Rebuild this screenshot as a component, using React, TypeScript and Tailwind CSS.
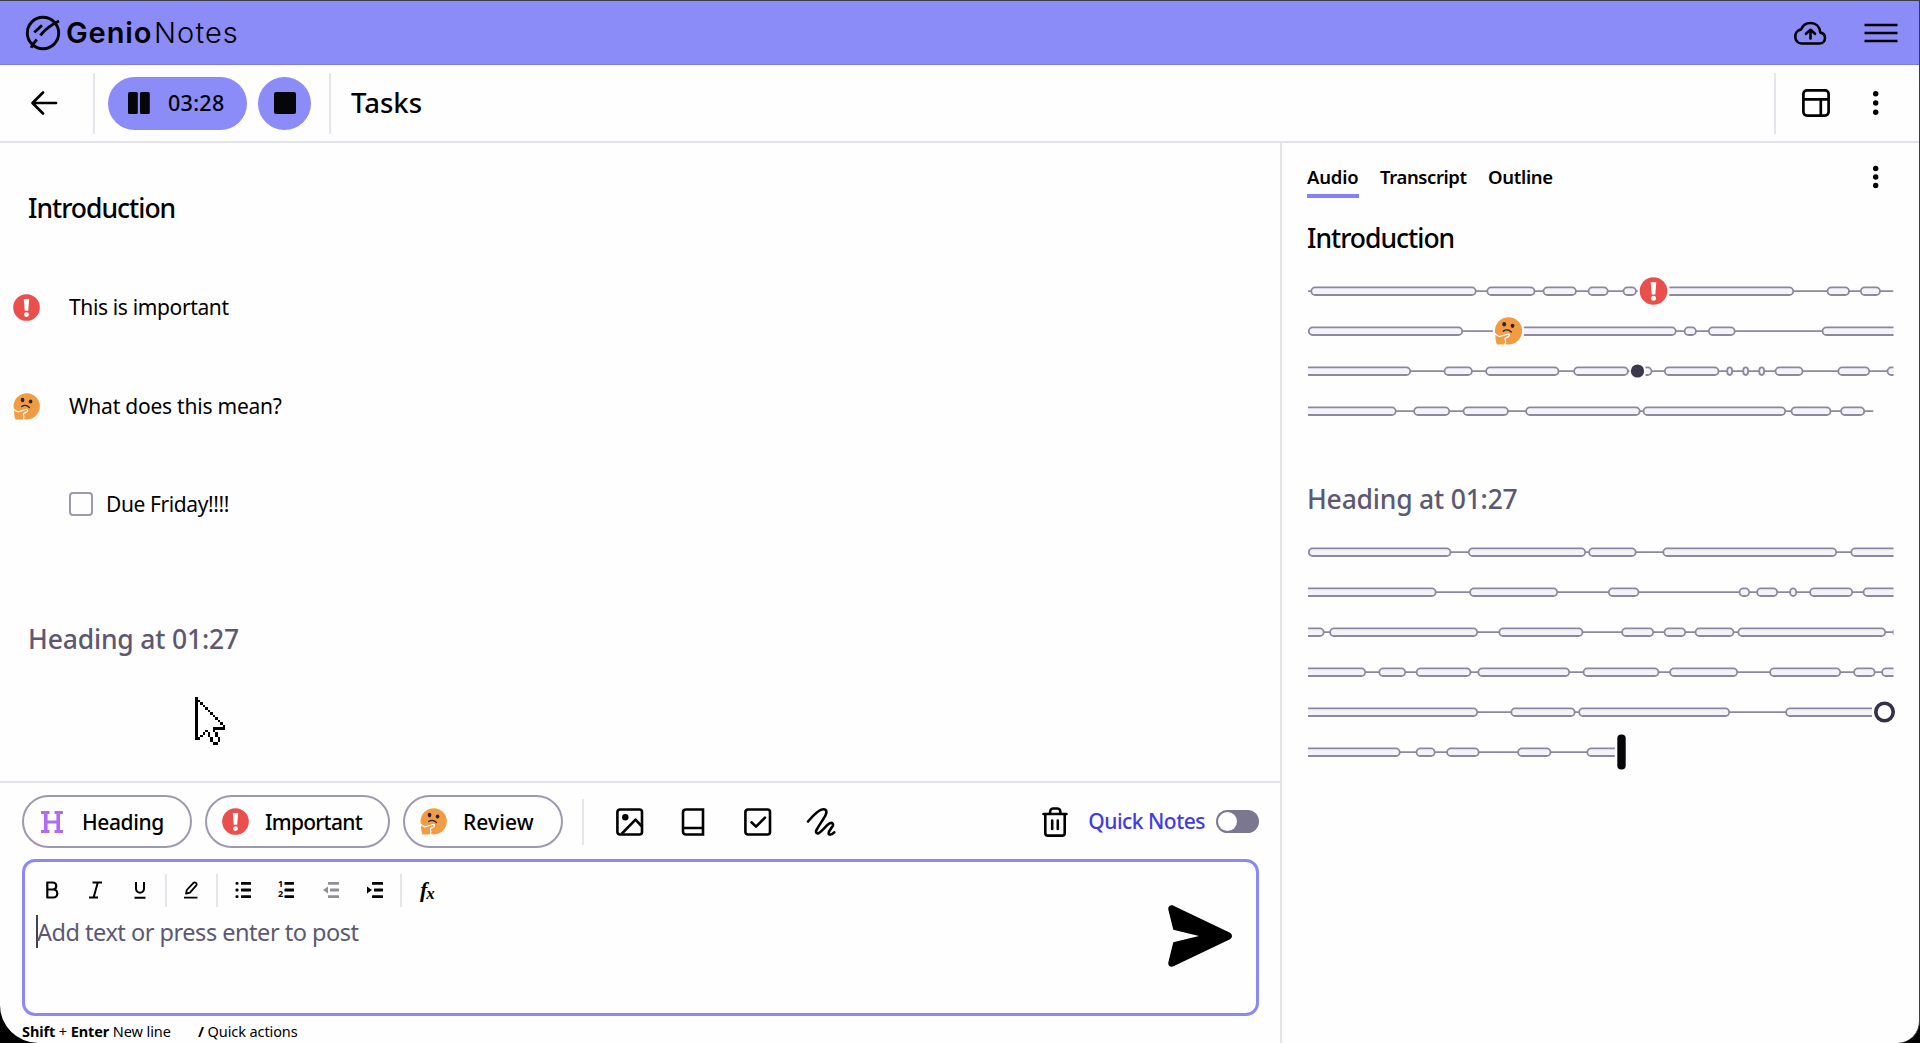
import React from 'react'
import clsx from 'clsx'

type MarkerKind = 'important' | 'review' | 'dot' | 'ring' | 'playhead'

interface Marker {
  kind: MarkerKind
  x: number
  gap: number
}

interface Track {
  pills: [number, number][]
  end?: number
  marker?: Marker
}

const TRACK_WIDTH = 585.5

// pills that start below 0 or run past TRACK_WIDTH continue from / onto another row
const INTRO_TRACKS: Track[] = [
  {
    pills: [[2.5, 168.5], [178.5, 227.3], [234.7, 268.7], [279.7, 300.5], [314.7, 328.7], [340, 486], [518.7, 541.8], [552, 572.8]],
    marker: { kind: 'important', x: 345.5, gap: 15.8 }
  },
  {
    pills: [[0, 155], [190, 368.5], [375.8, 388.7], [400, 427.5], [513.7, 600]],
    marker: { kind: 'review', x: 200.3, gap: 15.5 }
  },
  {
    pills: [[-9, 103], [135.7, 164.7], [177.3, 251.3], [265.3, 320.7], [328, 344.3], [356, 411.3], [418.5, 424.9], [434.5, 440.9], [450.5, 456.9], [466.7, 495.3], [529.5, 562], [578.7, 600]],
    marker: { kind: 'dot', x: 329.5, gap: 8 }
  },
  {
    pills: [[-9, 88.5], [105.3, 142], [154.7, 200.7], [217.3, 332.5], [334.7, 478], [482.7, 523.3], [532.3, 557]],
    end: 565.5
  }
]

const HEADING_TRACKS: Track[] = [
  { pills: [[0, 143.3], [160, 278], [280.3, 328.5], [354.5, 529], [542.5, 600]] },
  { pills: [[-9, 128.5], [161.3, 250], [300, 331.3], [430.7, 442], [448.3, 470], [481.3, 489], [501.3, 545], [554.7, 600]] },
  { pills: [[-9, 16.5], [21.3, 170], [190.5, 275.3], [313.3, 346], [355.7, 378], [386.7, 426.3], [429.5, 578], [584.5, 600]] },
  { pills: [[-9, 58], [70.5, 98], [107.8, 163.3], [169.5, 262], [274.7, 351.3], [361.3, 430], [461.3, 533], [545.3, 567.5], [573.3, 600]] },
  {
    pills: [[-9, 170], [202.5, 267.5], [270.3, 422], [477.3, 600]],
    marker: { kind: 'ring', x: 576.5, gap: 12.5 }
  },
  {
    pills: [[-9, 92.5], [107.7, 127.5], [138.3, 171.5], [209.3, 243.3], [278.5, 330]],
    end: 310,
    marker: { kind: 'playhead', x: 313.5, gap: 6.7 }
  }
]

// [column, row] cells of the pointer outline; the left edge is drawn as one bar
const POINTER_CELLS: [number, number][] = [
  [1, 1], [2, 2], [3, 3], [4, 4], [5, 5], [6, 6], [7, 7], [8, 8], [9, 9], [10, 10], [11, 11],
  [11, 12], [10, 12], [9, 12], [8, 12], [7, 12], [7, 13], [8, 14], [8, 15], [9, 16], [9, 17],
  [8, 18], [7, 18], [6, 17], [6, 16], [5, 15], [5, 14], [4, 13], [3, 14], [2, 15], [1, 16]
]

const ImportantGlyph: React.FC = () => (
  <>
    <circle cx="14" cy="14" r="13.8" fill="#ea4f4b" />
    <path d="M11.2 5.2h5.6l-1 12.2h-3.6z" fill="#fff" />
    <circle cx="14" cy="21.3" r="2.5" fill="#fff" />
  </>
)

const ReviewGlyph: React.FC = () => (
  <>
    <circle cx="14.2" cy="13.8" r="13.6" fill="#f19b42" />
    <ellipse cx="9.9" cy="7.2" rx="1.9" ry="2.3" fill="#26233a" />
    <ellipse cx="18.2" cy="8.8" rx="1.9" ry="2.1" fill="#26233a" />
    <path d="M9 14.1c2.4-1.7 5.7-1.3 8 .9" fill="none" stroke="#26233a" strokeWidth="1.3" strokeLinecap="round" />
    <path
      d="M.4 16.300c1 1.600 2.300 2.300 4.500 3.300l8.600-2.500c1.800-.3 2.100 1.700.6 2.500l-3.400 1.800c.9 2 .9 4.200-.2 6.600H2.400C.8 26.500.5 22.500.4 16.300z"
      fill="#f19b42"
      stroke="#fff"
      strokeWidth="1.2"
      strokeLinejoin="round"
    />
  </>
)

const ImportantIcon: React.FC = () => (
  <svg viewBox="0 0 28 28" className="size-[27px] shrink-0"><ImportantGlyph /></svg>
)

const ReviewIcon: React.FC = () => (
  <svg viewBox="0 0 28 28" className="size-[27px] shrink-0 overflow-visible"><ReviewGlyph /></svg>
)

const Pointer: React.FC = () => (
  <svg viewBox="0 0 12 19" className="absolute left-[195px] top-[554px] h-[47.5px] w-[30px]" shapeRendering="crispEdges">
    <path d="M.5.500v16h1l3-3.500 1.500 2 1 3.500h2l.5-2-2-4h4z" fill="#fff" />
    <rect x="0" y="0" width="1.1" height="17" />
    {POINTER_CELLS.map(([col, row]) => (
      <rect key={`${col}-${row}`} x={col} y={row} width="1" height="1" />
    ))}
  </svg>
)

const MarkerShape: React.FC<{ marker: Marker }> = ({ marker }) => {
  const { kind, x, gap } = marker
  return (
    <>
      <rect x={x - gap} y="8" width={gap * 2} height="24" fill="#fefefe" />
      {kind === 'important' && <g transform={`translate(${x - 14} 6)`}><ImportantGlyph /></g>}
      {kind === 'review' && <g transform={`translate(${x - 14} 6)`}><ReviewGlyph /></g>}
      {kind === 'dot' && <circle cx={x} cy="20" r="6.6" fill="#3a374f" />}
      {kind === 'ring' && <circle cx={x} cy="20" r="8.7" fill="#fff" stroke="#333047" strokeWidth="3.6" />}
      {kind === 'playhead' && <rect x={x - 4.2} y="2.5" width="8.4" height="35" rx="4" fill="#060608" />}
    </>
  )
}

const TrackRow: React.FC<{ track: Track }> = ({ track }) => (
  <svg width={TRACK_WIDTH} height="40" className="block overflow-visible">
    <svg width={track.end ?? TRACK_WIDTH} height="40">
      <line x1="0" x2={track.end ?? TRACK_WIDTH} y1="20.2" y2="20.2" stroke="#8b889f" strokeWidth="1.8" />
      {track.pills.map(([from, to]) => (
        <rect
          key={from}
          x={from + 0.8}
          y="16.4"
          width={to - from - 1.6}
          height="7.6"
          rx={Math.min(3.8, (to - from) / 2)}
          fill="#f4f3f8"
          stroke="#8b889f"
          strokeWidth="1.8"
        />
      ))}
    </svg>
    {track.marker && <MarkerShape marker={track.marker} />}
  </svg>
)

const Dots: React.FC<{ gap: number }> = ({ gap }) => (
  <svg viewBox="0 0 8 28" className="h-[28px] w-[8px]" fill="#000">
    <circle cx="3.7" cy={14 - gap} r="2.7" />
    <circle cx="3.7" cy="14" r="2.7" />
    <circle cx="3.7" cy={14 + gap} r="2.7" />
  </svg>
)

const Logo: React.FC = () => (
  <svg viewBox="0 0 36 36" className="size-[36px]" fill="none" stroke="#000" strokeWidth="2.9">
    <circle cx="18" cy="18" r="15.7" />
    <path d="M9.3 17.5 17 10.3M15.3 20.3C20 14.5 26 9.8 34 6M6.2 32.8c1-2.5 2.800-5.300 5.600-8.300" />
  </svg>
)

const Header: React.FC = () => (
  <header className="flex h-[64px] shrink-0 items-center border-b border-[#7b79e6] bg-[#8c8cf8] pl-[25px] pr-[21px]">
    <Logo />
    <div className="ml-[5px] flex font-[Inter,sans-serif] text-[29px] leading-none">
      <span className="w-[88px] font-semibold tracking-[0.9px]">Genio</span>
      <span className="font-light tracking-[1.1px]">Notes</span>
    </div>
    <div className="ml-auto flex items-center gap-[37px]">
      <svg viewBox="0 0 34 26" className="h-[26px] w-[34px]" fill="none" stroke="#000" strokeWidth="2.6" strokeLinecap="round" strokeLinejoin="round">
        <path d="M8.500 23.500h18c3.300 0 5.500-2.500 5.500-5.500 0-2.800-1.900-5-4.600-5.400C26.700 6.500 22.600 3 17.500 3c-4.300 0-7.800 2.400-9.300 6.400C4.700 10 2.300 12.900 2.300 16.500c0 4 2.700 7 6.200 7z" />
        <path d="M17.500 18.500v-8M13 13.800l4.500-4 4.500 4" />
      </svg>
      <svg viewBox="0 0 34 22" className="h-[22px] w-[34px]" stroke="#000" strokeWidth="2.7">
        <path d="M.5 3h33M.5 11h33M.5 19h33" />
      </svg>
    </div>
  </header>
)

const Toolbar: React.FC = () => (
  <div className="flex h-[78px] shrink-0 items-center border-b-2 border-[#e3e3ea]">
    <svg viewBox="0 0 28 26" className="ml-[30px] h-[26px] w-[28px]" fill="none" stroke="#000" strokeWidth="2.7" strokeLinecap="round" strokeLinejoin="round">
      <path d="M26 13H3M13 2.500 2.500 13 13 23.500" />
    </svg>
    <div className="ml-[35px] h-[61px] w-[2px] bg-[#e5e5ec]" />
    <div className="ml-[13px] flex h-[53px] w-[139px] items-center rounded-full bg-[#8c8cf8] pl-[20px]">
      <svg viewBox="0 0 22 22" className="size-[22px]" fill="#060608">
        <rect x="0" y="0" width="9.8" height="22" rx="1.5" />
        <rect x="12" y="0" width="9.8" height="22" rx="1.5" />
      </svg>
      <span className="ml-[18px] text-[21.5px] font-medium leading-none tracking-[0.3px]">03:28</span>
    </div>
    <div className="ml-[11px] flex size-[53px] items-center justify-center rounded-full bg-[#8c8cf8]">
      <div className="size-[22px] rounded-[2px] bg-[#060608]" />
    </div>
    <div className="ml-[18px] h-[61px] w-[2px] bg-[#e5e5ec]" />
    <h1 className="ml-[20px] text-[27.5px] font-medium leading-none">Tasks</h1>
    <div className="ml-auto mr-[26px] h-[61px] w-[2px] bg-[#e5e5ec]" />
    <svg viewBox="0 0 28 28" className="size-[28px]" fill="none" stroke="#000" strokeWidth="2.7">
      <rect x="1.4" y="1.4" width="25.2" height="25.2" rx="3.5" />
      <path d="M1.500 10.300h25M18.800 10.300v16" />
    </svg>
    <div className="ml-[42px] mr-[39px]"><Dots gap={9.3} /></div>
  </div>
)

const Notes: React.FC = () => (
  <section className="relative flex flex-1 flex-col overflow-hidden">
    <h2 className="mt-[47px] pl-[28px] text-[26.5px] font-medium leading-[36px] tracking-[-1px]">Introduction</h2>
    <div className="mt-[67px] flex h-[28px] items-center pl-[13px]">
      <ImportantIcon />
      <p className="ml-[29px] text-[21px] leading-none tracking-[-0.36px]">This is important</p>
    </div>
    <div className="mt-[71px] flex h-[28px] items-center pl-[13px]">
      <ReviewIcon />
      <p className="ml-[29px] text-[21px] leading-none tracking-[-0.22px]">What does this mean?</p>
    </div>
    <div className="mt-[70px] flex h-[28px] items-center pl-[69px]">
      <div className="size-[24px] rounded-[4px] border-2 border-[#9d9ab0]" />
      <p className="ml-[13px] text-[21px] leading-none tracking-[-0.4px]">Due Friday!!!!</p>
    </div>
    <h2 className="mt-[103px] pl-[28px] text-[26.5px] font-medium leading-[36px] tracking-[-0.18px] text-[#5c5874]">Heading at 01:27</h2>
    <Pointer />
  </section>
)

interface ChipProps {
  label: string
  className: string
  labelClassName: string
  icon: React.ReactNode
}

const Chip: React.FC<ChipProps> = ({ label, className, labelClassName, icon }) => (
  <button className={clsx('flex h-[53px] items-center rounded-full border-2 border-[#9d9ab0]', className)}>
    {icon}
    <span className={clsx('pt-px text-[21px] font-medium leading-none', labelClassName)}>{label}</span>
  </button>
)

const HeadingIcon: React.FC = () => (
  <svg viewBox="0 0 22 22" className="size-[22px]" stroke="#b26bf7" fill="none">
    <path d="M4.800 1.500v19M17.200 1.500v19" strokeWidth="3.6" />
    <path d="M5 11h12" strokeWidth="2.8" />
    <path d="M0 1.500h8.500M13.500 1.500H22M0 20.500h8.500M13.500 20.500H22" strokeWidth="2.9" />
  </svg>
)

const ActionBar: React.FC = () => (
  <div className="flex h-[53px] items-center">
    <Chip label="Heading" className="w-[170px] pl-[17px]" labelClassName="ml-[19px] tracking-[-0.4px]" icon={<HeadingIcon />} />
    <Chip label="Important" className="ml-[13px] w-[185px] pl-[15px]" labelClassName="ml-[16px] tracking-[-0.7px]" icon={<ImportantIcon />} />
    <Chip label="Review" className="ml-[13px] w-[160px] pl-[15px]" labelClassName="ml-[16px] tracking-[0.1px]" icon={<ReviewIcon />} />
    <div className="ml-[19px] h-[46px] w-[2px] bg-[#e5e5ec]" />
    <svg viewBox="0 0 28 28" className="ml-[32px] size-[28px]" fill="none" stroke="#000" strokeWidth="2.6" strokeLinejoin="round">
      <rect x="1.4" y="1.5" width="24.6" height="25" rx="2.5" />
      <circle cx="9.3" cy="9.3" r="3.2" fill="#000" stroke="none" />
      <path d="m5.500 26 14-14.300 6.500 7" />
    </svg>
    <svg viewBox="0 0 24 28" className="ml-[37px] h-[28px] w-[24px]" fill="none" stroke="#000" strokeWidth="2.6">
      <path d="M22 1.500v25H5c-2 0-3-1.200-3-3v-19c0-2 1-3 3-3zM2.500 20H22" />
    </svg>
    <svg viewBox="0 0 28 28" className="ml-[39px] size-[28px]" fill="none" stroke="#000" strokeWidth="2.6" strokeLinecap="round" strokeLinejoin="round">
      <rect x="1.4" y="1.5" width="24.6" height="25" rx="2.5" />
      <path d="m7.500 14.300 4.500 4.300 9-9" />
    </svg>
    <svg viewBox="0 0 30 30" className="ml-[34px] size-[30px]" fill="none" stroke="#000" strokeWidth="2.6" strokeLinecap="round" strokeLinejoin="round">
      <path d="M2 14.500C7 8.500 13.500 2 17.500 2.200c3.300.2 3.500 3 2 6-2 4.300-8 12-9.300 15.500-.7 2.300.8 3.300 2.800 2.300 3.500-2 7.500-8 11-9.800 2.300-1 3.700.8 2.600 3-1.100 2-4 4.800-4 7 0 2.300 3.400 1.600 5.600-.9" />
    </svg>
    <svg viewBox="0 0 26 30" className="ml-auto h-[30px] w-[26px]" fill="none" stroke="#000" strokeWidth="2.6" strokeLinecap="round" strokeLinejoin="round">
      <path d="M1.500 7h23M3.300 7v19c0 1.700 1 2.600 2.600 2.600h14.200c1.700 0 2.600-.9 2.600-2.600V7M8 6.500C8 3 9 1.500 11 1.500h4.500c2 0 3 1.500 3 5M10.200 13.500v8.500M15.800 13.500v8.500" />
    </svg>
    <span className="ml-[20px] text-[21px] font-medium leading-none tracking-[-0.5px] text-[#3f3bea]">Quick Notes</span>
    <div className="ml-[11px] flex h-[23px] w-[43px] items-center rounded-full bg-[#7b7790] pl-[2px]">
      <div className="size-[19px] rounded-full bg-[#fefefe]" />
    </div>
  </div>
)

const ListLines: React.FC<{ x: number; children?: React.ReactNode; faded?: boolean }> = ({ x, children, faded }) => (
  <svg viewBox="0 0 16 18" className="h-[18px] w-[16px]" fill={faded ? '#8f8f96' : '#000'}>
    <rect x={x} y="1" width={16 - x} height="2.8" rx="0.5" />
    <rect x={faded === undefined ? x : x + 2} y="7.6" width={faded === undefined ? 16 - x : 14 - x} height="2.8" rx="0.5" />
    <rect x={x} y="14.2" width={16 - x} height="2.8" rx="0.5" />
    {children}
  </svg>
)

const Separator: React.FC = () => <div className="h-[33px] w-[2px] bg-[#e5e5ec]" />

const FormatBar: React.FC = () => (
  <div className="flex h-[34px] items-center pl-[20px]">
    <svg viewBox="0 0 14 18" className="h-[18px] w-[14px]" fill="none" stroke="#000" strokeWidth="2.2" strokeLinejoin="round">
      <path d="M2.300 1.500h5.200c5 0 5 7 0 7H2.300zM2.300 8.500h6c5.300 0 5.300 8 0 8h-6z" />
    </svg>
    <svg viewBox="0 0 14 18" className="ml-[30px] h-[18px] w-[14px]" fill="none" stroke="#000" strokeWidth="2">
      <path d="M3.500 1.500H13M0 16.500h9M8.800 1.500l-4.200 15" />
    </svg>
    <svg viewBox="0 0 12 18" className="ml-[31px] h-[18px] w-[12px]" fill="none" stroke="#000" strokeWidth="2">
      <path d="M2 1v6.500c0 5.500 8 5.500 8 0V1M.5 16.700h11" />
    </svg>
    <div className="ml-[19px]"><Separator /></div>
    <svg viewBox="0 0 16 18" className="ml-[16px] h-[18px] w-[16px]" fill="none" stroke="#000" strokeWidth="1.8" strokeLinejoin="round">
      <path d="m3 12.700.8-3.700 6.700-7.200c1.500-1.300 4 .8 2.800 2.500L7 11.700zM1 16.700h13.500" />
    </svg>
    <div className="ml-[17px]"><Separator /></div>
    <div className="ml-[17px]">
      <ListLines x={6}>
        <rect x="0.5" y="1" width="3" height="2.8" rx="1" />
        <rect x="0.5" y="7.6" width="3" height="2.8" rx="1" />
        <rect x="0.5" y="14.2" width="3" height="2.8" rx="1" />
      </ListLines>
    </div>
    <div className="relative ml-[27px] h-[18px] w-[16px]">
      <ListLines x={6.5} />
      <div className="absolute left-0 top-0 flex flex-col text-[9px] font-bold leading-[10px]">
        <span className="-mt-[2px]">1</span>
        <span>2</span>
      </div>
    </div>
    <div className="ml-[29px]">
      <ListLines x={5} faded>
        <path d="M5 5.500v7L0 9z" />
      </ListLines>
    </div>
    <div className="ml-[28px]">
      <ListLines x={5} faded={false}>
        <path d="M0 5.500v7L5 9z" />
      </ListLines>
    </div>
    <div className="ml-[17px]"><Separator /></div>
    <span className="ml-[18px] font-['Liberation_Serif',serif] text-[22px] font-bold italic leading-none tracking-[-1px]">
      f<span className="relative top-[2px] text-[17px]">x</span>
    </span>
  </div>
)

const Editor: React.FC = () => (
  <div className="mt-[11px] flex h-[157px] w-full rounded-[13px] border-[3px] border-[#8b89f9]">
    <div className="flex flex-1 flex-col pt-[11px]">
      <FormatBar />
      <div className="mt-[8px] flex h-[33px] items-center pl-[11px]">
        <div className="h-[33px] w-[2px] bg-[#444]" />
        <span className="-ml-px pt-[2px] text-[23.5px] leading-none tracking-[-0.48px] text-[#5c5874]">Add text or press enter to post</span>
      </div>
    </div>
    <svg viewBox="0 0 64 62" className="mr-[24px] mt-[43px] h-[62px] w-[64px]" fill="#000">
      <path d="M.3 4.500C-.2 1.200 2.500-.6 5.500.7L61.500 27.500c3.300 1.700 3.300 5.300 0 7L5.500 61.300C2.500 62.600-.2 60.800.3 57.500L5.300 37.300 31 31 5.300 24.700z" />
    </svg>
  </div>
)

const Composer: React.FC = () => (
  <footer className="flex h-[262px] shrink-0 flex-col border-t-2 border-[#e3e3ea] pl-[22px] pr-[21px] pt-[12px]">
    <ActionBar />
    <Editor />
    <div className="mt-[7px] flex gap-[25px] text-[14.5px] leading-[16px] tracking-[-0.1px]">
      <p className="w-[151px]"><b>Shift</b> + <b>Enter</b> New line</p>
      <p><b>/</b> Quick actions</p>
    </div>
  </footer>
)

const AudioPanel: React.FC = () => (
  <aside className="w-[639px] shrink-0 border-l-2 border-[#e3e3ea] pl-[25px]">
    <div className="flex pt-[20px]">
      <span className="h-[35px] w-[52px] border-b-[4px] border-[#8380f8] text-[18.5px] font-semibold leading-[27px] tracking-[-0.2px]">Audio</span>
      <span className="ml-[21px] w-[88px] text-[18.5px] font-semibold leading-[27px] tracking-[-0.4px]">Transcript</span>
      <span className="ml-[20px] text-[18.5px] font-semibold leading-[27px] tracking-[-0.3px]">Outline</span>
      <div className="ml-auto mr-[39px]"><Dots gap={8.5} /></div>
    </div>
    <h2 className="mt-[22px] text-[26.5px] font-medium leading-[36px] tracking-[-1px]">Introduction</h2>
    <div className="mt-[15px] pl-px">
      {INTRO_TRACKS.map((track, i) => <TrackRow key={i} track={track} />)}
    </div>
    <h2 className="mt-[50px] text-[26.5px] font-medium leading-[36px] tracking-[-0.2px] text-[#5c5874]">Heading at 01:27</h2>
    <div className="mt-[15px] pl-px">
      {HEADING_TRACKS.map((track, i) => <TrackRow key={i} track={track} />)}
    </div>
  </aside>
)

export default function App() {
  return (
    <div className="h-[1043px] w-[1920px] overflow-hidden bg-black font-['Noto_Sans',sans-serif] text-black">
      <div className="flex h-full flex-col overflow-hidden rounded-bl-[38px] rounded-br-[22px] border-r border-t border-[#3c3c44] bg-[#fefefe]">
        <Header />
        <Toolbar />
        <div className="flex min-h-0 flex-1">
          <main className="flex min-w-0 flex-1 flex-col">
            <Notes />
            <Composer />
          </main>
          <AudioPanel />
        </div>
      </div>
    </div>
  )
}
